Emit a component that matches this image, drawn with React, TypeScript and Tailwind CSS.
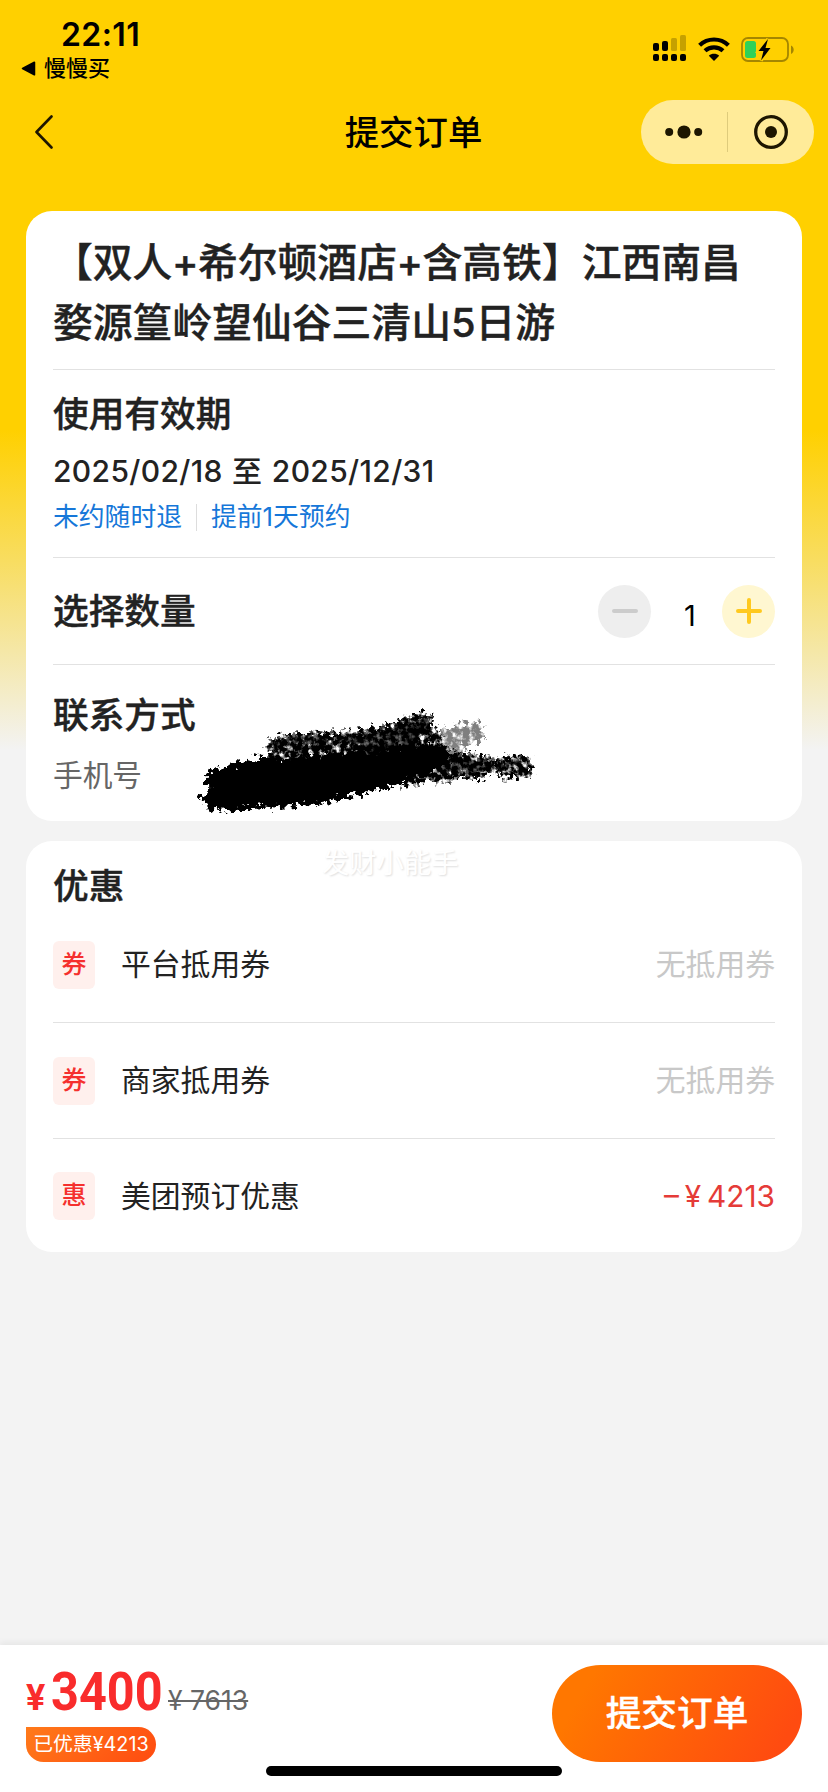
import { useState } from "react";

const discounts = [
  { tag: "券", label: "平台抵用券", value: "无抵用券", active: false },
  { tag: "券", label: "商家抵用券", value: "无抵用券", active: false },
  { tag: "惠", label: "美团预订优惠", value: "– ¥ 4213", active: true },
];

function SignalIcon() {
  return (
    <svg width="34" height="27" viewBox="0 0 34 27">
      <g fill="#000">
        <rect x="0" y="8" width="6" height="8" rx="2" />
        <rect x="9" y="6" width="6" height="10" rx="2" />
        <rect x="0" y="19" width="6" height="7" rx="2" />
        <rect x="9" y="19" width="6" height="7" rx="2" />
        <rect x="18" y="19" width="6" height="7" rx="2" />
        <rect x="27" y="19" width="6" height="7" rx="2" />
      </g>
      <g fill="#000" opacity="0.22">
        <rect x="18" y="3" width="6" height="13" rx="1.5" />
        <rect x="27" y="0" width="6" height="16" rx="1.5" />
      </g>
    </svg>
  );
}

function WifiIcon() {
  return (
    <svg width="32" height="24" viewBox="0 0 32 24">
      <g fill="none" stroke="#000" strokeWidth="4.2">
        <path d="M1.6 8.2C9.6 0.6 22.4 0.6 30.4 8.2" />
        <path d="M7 13.8C12 9.2 20 9.2 25 13.8" />
      </g>
      <path d="M16 24L10.8 18.7C13.8 16.2 18.2 16.2 21.2 18.7Z" fill="#000" />
    </svg>
  );
}

function BatteryIcon() {
  return (
    <svg width="54" height="27" viewBox="0 0 54 27">
      <rect
        x="1"
        y="2"
        width="46"
        height="23"
        rx="6"
        fill="none"
        stroke="#a58600"
        strokeWidth="1.8"
      />
      <path d="M50 9.5C53.6 11 53.6 16.5 50 18Z" fill="#a58600" />
      <rect x="4" y="5" width="11" height="17" rx="2.5" fill="#30d158" />
      <path
        d="M27 3L17.5 15H22.5L20 24.5L29.5 12H24.5Z"
        fill="#000"
        stroke="#ffd000"
        strokeWidth="3.5"
        paintOrder="stroke"
      />
    </svg>
  );
}

// Brush marks that hide the phone number
function Scribble() {
  return (
    <svg
      className="pointer-events-none absolute left-[154px] top-[479px]"
      width="380"
      height="140"
      viewBox="0 0 1140 420"
    >
      <defs>
        <filter id="rough" x="-5%" y="-10%" width="110%" height="120%">
          <feTurbulence type="fractalNoise" baseFrequency="0.06" numOctaves="3" seed="4" result="n" />
          <feDisplacementMap in="SourceGraphic" in2="n" scale="60" xChannelSelector="R" yChannelSelector="G" result="d" />
          <feGaussianBlur in="d" stdDeviation="2" />
        </filter>
        <filter id="grain" x="-5%" y="-10%" width="110%" height="120%">
          <feTurbulence type="fractalNoise" baseFrequency="0.06" numOctaves="3" seed="9" result="n" />
          <feDisplacementMap in="SourceGraphic" in2="n" scale="60" xChannelSelector="R" yChannelSelector="G" result="d" />
          <feColorMatrix in="n" type="matrix" values="0 0 0 0 0  0 0 0 0 0  0 0 0 0 0  0 0 0 3.6 -0.9" result="a" />
          <feComposite in="d" in2="a" operator="in" result="c" />
          <feGaussianBlur in="c" stdDeviation="2.2" />
        </filter>
      </defs>
      <g filter="url(#grain)">
        <path d="M262 150L330 130L440 128L540 120L640 98L715 72L752 68L768 118L800 170L800 230L500 240L240 220L262 190Z" />
        <path d="M690 180L800 185L890 192L950 208L1020 190L1050 205L1060 262L970 266L945 245L900 266L760 276L660 290Z" />
        <path d="M760 130L830 105L905 92L912 150L860 170L830 195L760 190Z" opacity="0.5" />
      </g>
      <g filter="url(#rough)">
        <path d="M80 250L170 220L240 203L340 205L460 188L580 180L700 165L780 165L820 195L800 230L700 266L600 300L520 316L380 346L200 358L95 364L60 325L82 300Z" />
        <path d="M270 160L340 138L430 136L450 165L340 160L280 185Z" opacity="0.6" />
        <path d="M480 150L560 132L640 108L740 76L755 110L700 165L560 185Z" opacity="0.6" />
        <path d="M800 200L890 205L950 222L1015 205L1030 220L960 238L860 250L780 252Z" opacity="0.6" />
      </g>
    </svg>
  );
}

export default function App() {
  const [count, setCount] = useState(1);

  return (
    <div className="flex h-[1792px] w-[828px] flex-col overflow-hidden bg-[#f3f3f3] bg-[linear-gradient(180deg,#ffd000_0px,#ffd000_430px,#f8dd60_560px,#f5e7a6_650px,#f3f3f3_750px)] font-['Inter','Noto_Sans_CJK_SC',sans-serif] text-[#222]">
      <header className="h-[211px] shrink-0">
        <div className="flex h-[88px] justify-between pl-[21px] pr-[33px]">
          <div className="pt-[16px] text-black">
            <div className="pl-[40px] text-[32px] font-semibold leading-[38px] tracking-[0.4px]">
              22:11
            </div>
            <div className="flex h-[28px] items-center gap-[8px] text-[22px] font-medium leading-[28px]">
              <svg width="15" height="15" viewBox="0 0 14 14">
                <path d="M1.5 7L12.5 1.2V12.8Z" fill="#000" stroke="#000" strokeWidth="1.6" strokeLinejoin="round" />
              </svg>
              <span>慢慢买</span>
            </div>
          </div>
          <div className="flex items-start pt-[35px]">
            <SignalIcon />
            <div className="ml-[11px] mt-[2px]">
              <WifiIcon />
            </div>
            <div className="ml-[11px] mt-px">
              <BatteryIcon />
            </div>
          </div>
        </div>
        <nav className="grid h-[88px] grid-cols-[1fr_auto_1fr] items-center pl-[34px] pr-[14px]">
          <svg width="20" height="34" viewBox="0 0 20 34">
            <path d="M17.5 1.5L2.5 17L17.5 32.5" fill="none" stroke="#1d1600" strokeWidth="2.6" strokeLinecap="round" strokeLinejoin="round" />
          </svg>
          <h1 className="-ml-[21px] mt-0.5 text-[34.4px] font-medium leading-[44px] text-black">提交订单</h1>
          <div className="flex h-[64px] w-[173px] items-center justify-self-end rounded-full bg-[#ffeb99]">
            <div className="flex w-[86px] justify-center">
              <svg width="38" height="14" viewBox="0 0 38 14" fill="#1d1600">
                <circle cx="4.2" cy="7" r="4" />
                <circle cx="19" cy="7" r="6.6" />
                <circle cx="33.2" cy="7" r="4" />
              </svg>
            </div>
            <div className="h-[40px] w-px bg-[#decb7c]" />
            <div className="flex w-[86px] justify-center">
              <svg width="34" height="34" viewBox="0 0 34 34">
                <circle cx="17" cy="17" r="15.3" fill="none" stroke="#1d1600" strokeWidth="3.3" />
                <circle cx="17" cy="17" r="6" fill="#1d1600" />
              </svg>
            </div>
          </div>
        </nav>
      </header>

      <main className="flex flex-1 flex-col gap-5 px-[26px]">
        <section className="relative h-[610px] rounded-[26px] bg-white px-[27px]">
          <h2 className="h-[159px] border-b border-[#e2e2e2] pt-[22px] text-[39.8px] font-medium leading-[60px] [-webkit-text-stroke:0.4px]">
            【双人<span className="-mx-[0.5px]">+</span>希尔顿酒店<span className="-mx-[0.5px]">+</span>含高铁】江西南昌
            <br />
            婺源篁岭望仙谷三清山5日游
          </h2>
          <div className="h-[188px] border-b border-[#e2e2e2] pt-[19px]">
            <h3 className="text-[35.7px] font-medium leading-[50px] [-webkit-text-stroke:0.4px]">使用有效期</h3>
            <p className="mt-[11px] text-[30px] font-medium leading-[42px] tracking-[0.35px] [word-spacing:1px]">
              2025/02/18 至 2025/12/31
            </p>
            <div className="mt-[7px] flex items-center text-[25.8px] leading-[36px] text-[#1677d9]">
              <span>未约随时退</span>
              <span className="mx-[14px] h-[27px] w-px bg-[#ddd]" />
              <span>提前1天预约</span>
            </div>
          </div>
          <div className="flex h-[107px] items-center justify-between border-b border-[#e2e2e2]">
            <h3 className="text-[35.7px] font-medium leading-[50px] [-webkit-text-stroke:0.4px]">选择数量</h3>
            <div className="flex items-center">
              <button
                className="flex size-[53px] items-center justify-center rounded-full bg-[#eee]"
                onClick={() => setCount(Math.max(1, count - 1))}
              >
                <span className="h-1 w-[26px] rounded-full bg-[#ccc]" />
              </button>
              <span className="w-[71px] pl-[7px] pt-[9px] text-center text-[29px] leading-[36px] text-black">
                {count}
              </span>
              <button
                className="flex size-[53px] items-center justify-center rounded-full bg-[#fff7d1]"
                onClick={() => setCount(count + 1)}
              >
                <svg width="26" height="26" viewBox="0 0 26 26">
                  <path d="M2 13H24M13 2V24" stroke="#ffc91f" strokeWidth="4" strokeLinecap="round" />
                </svg>
              </button>
            </div>
          </div>
          <div className="pt-[25px]">
            <h3 className="text-[35.7px] font-medium leading-[50px] [-webkit-text-stroke:0.4px]">联系方式</h3>
            <p className="mt-[15px] text-[29.7px] leading-[40px] text-[#666]">手机号</p>
          </div>
          <Scribble />
        </section>

        <section className="relative h-[411px] rounded-[26px] bg-white px-[27px]">
          <h3 className="h-[66px] pt-[20px] text-[35.7px] font-medium leading-[50px] [-webkit-text-stroke:0.4px]">优惠</h3>
          {discounts.map((item) => (
            <div
              key={item.label}
              className="flex h-[116px] items-center border-b border-[#e2e2e2] text-[29.8px] last-of-type:h-[114px] last-of-type:border-b-0"
            >
              <span className="flex h-[48px] w-[42px] items-center justify-center rounded-[6px] bg-[#fff0ed] text-[25px] font-medium text-[#f5302e]">
                {item.tag}
              </span>
              <span className="ml-[26px] flex-1">{item.label}</span>
              <span
                className={
                  item.active ? "text-[#e53b38] [word-spacing:-2.5px]" : "text-[#c8c8c8]"
                }
              >
                {item.value}
              </span>
            </div>
          ))}
          <span className="absolute left-[296px] top-[5px] text-[27.3px] leading-[36px] text-white [text-shadow:1px_1px_2px_#dedede]">
            发财小能手
          </span>
        </section>
      </main>

      <footer className="relative flex h-[147px] shrink-0 justify-between bg-white px-[26px] pt-5 shadow-[0_-3px_6px_rgba(0,0,0,0.05)]">
        <div>
          <div className="flex h-[50px] items-baseline pt-[2px]">
            <span className="w-[25px] font-['Roboto'] text-[36px] font-bold leading-[50px] text-[#f92c2c]">¥</span>
            <span className="w-[110px] origin-left scale-x-[0.9] font-['Roboto'] text-[54px] font-bold leading-[50px] text-[#f92c2c]">
              3400
            </span>
            <span className="ml-[7px] text-[26.5px] leading-[50px] text-[#666] line-through">¥ 7613</span>
          </div>
          <div className="mt-[12px] flex h-[35px] w-[130px] items-center justify-center rounded-full rounded-tl-[2px] bg-[linear-gradient(135deg,#ff7a1a,#ff4b10)] text-[19.8px] text-white">
            已优惠¥4213
          </div>
        </div>
        <button className="h-[97px] w-[250px] rounded-full bg-[linear-gradient(120deg,#ff7700_15%,#ff4b10_90%)] text-[35.7px] font-medium text-white [-webkit-text-stroke:0.3px]">
          提交订单
        </button>
        <div className="absolute left-[266px] top-[121px] h-[10px] w-[296px] rounded-full bg-black" />
      </footer>
    </div>
  );
}
